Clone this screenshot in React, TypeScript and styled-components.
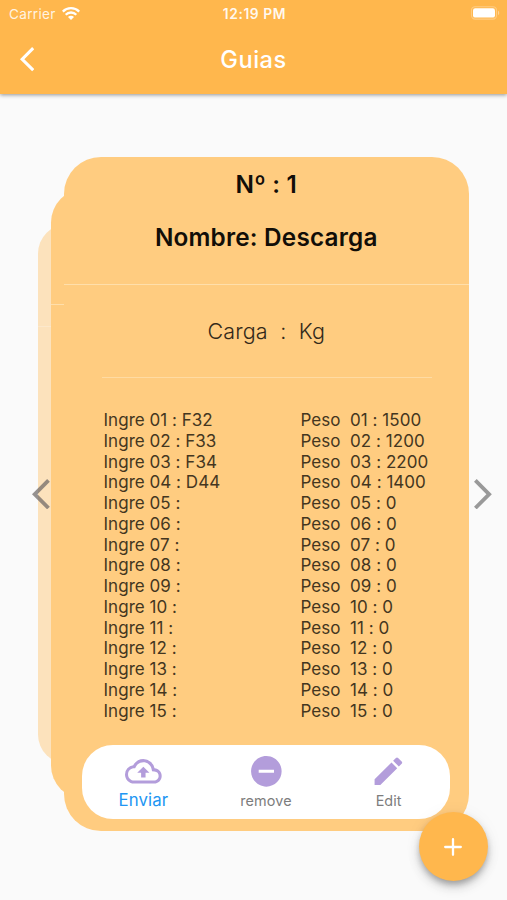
import React from "react";
import styled, { createGlobalStyle, css } from "styled-components";

const GlobalStyle = createGlobalStyle`
  *, *::before, *::after { box-sizing: border-box; }
  html, body { margin: 0; padding: 0; }
  body {
    background: #fafafa;
    font-family: Inter, Roboto, "Liberation Sans", sans-serif;
    font-feature-settings: "calt" 0;
  }
`;

const Screen = styled.div`
  position: relative;
  width: 507px;
  height: 900px;
  overflow: hidden;
  background: #fafafa;
  display: flex;
  flex-direction: column;
`;

const Header = styled.header`
  height: 94px;
  flex: none;
  background: #ffb74d;
  color: #fff;
  box-shadow: 0 1px 4px rgba(0, 0, 0, 0.42);
`;

const StatusBar = styled.div`
  height: 27px;
  padding: 1px 7px 0 9px;
  display: grid;
  grid-template-columns: 1fr auto 1fr;
  align-items: center;
  font-size: 13.6px;
  line-height: 26px;
`;

const Carrier = styled.div`
  display: flex;
  align-items: center;
  gap: 6px;
  color: rgba(255, 255, 255, 0.85);
  letter-spacing: 0.3px;

  svg {
    margin-top: -2px;
  }
`;

const Clock = styled.div`
  font-weight: 600;
  font-size: 13.8px;
  letter-spacing: 0.6px;
  color: rgba(255, 255, 255, 0.92);
`;

const BatterySlot = styled.div`
  display: flex;
  justify-content: flex-end;
  margin-top: -2px;
`;

const TitleBar = styled.div`
  height: 66px;
  display: grid;
  grid-template-columns: 100px 1fr 100px;
  align-items: center;
  padding: 0 0 1px;
`;

const BackButton = styled.button`
  border: 0;
  padding: 0 0 0 20px;
  background: none;
  color: #fff;
  display: flex;
`;

const Title = styled.h1`
  margin: 0;
  text-align: center;
  font-size: 23.6px;
  font-weight: 500;
  line-height: 30px;
  letter-spacing: 0.5px;
`;

const Carousel = styled.main`
  height: 674px;
  margin-top: 63px;
  flex: none;
  display: grid;
  grid-template-columns: 32px 1fr 15.5px;
  align-items: center;
`;

const Deck = styled.div`
  grid-column: 1 / -1;
  grid-row: 1;
  display: grid;
  align-items: center;
  justify-items: start;
  height: 674px;
`;

const layer = css`
  grid-area: 1 / 1;
  overflow: hidden;
`;

const BackCard = styled.div<{ $left: number; $scale: number; $faded?: boolean }>`
  ${layer}
  margin-left: ${(p) => p.$left}px;
  width: ${(p) => 404.5 * p.$scale}px;
  height: ${(p) => 674 * p.$scale}px;
  border-radius: ${(p) => 37 * p.$scale}px;
  background: ${(p) => (p.$faded ? "#fce2bc" : "#ffcc80")};
  padding-top: ${(p) => 127 * p.$scale}px;
`;

const Card = styled.section`
  ${layer}
  margin-left: 64px;
  width: 404.5px;
  height: 674px;
  border-radius: 37px;
  background: #ffcc80;
  display: flex;
  flex-direction: column;
`;

const Rule = styled.hr<{ $tone?: "soft" | "faded" }>`
  border: 0;
  margin: ${(p) => (p.$tone === "soft" ? "0 37px 0 38px" : "0")};
  height: 1px;
  flex: none;
  background: ${(p) =>
    p.$tone === "soft" ? "#ffdba3" : p.$tone === "faded" ? "#fce8cb" : "#ffdfab"};
`;

const CardHead = styled.div`
  height: 127px;
  flex: none;
  padding-top: 12px;
  text-align: center;
  font-size: 24.3px;
  font-weight: 600;
  line-height: 30px;
  color: #120e08;
`;

const GuideNumber = styled.div`
  letter-spacing: 0.2px;
`;

const Name = styled.div`
  margin-top: 23px;
  letter-spacing: 0.2px;
`;

const Load = styled.div`
  height: 92px;
  flex: none;
  line-height: 92px;
  text-align: center;
  white-space: pre;
  font-size: 21.5px;
  font-weight: 300;
  letter-spacing: 0.15px;
  color: #33291a;
`;

const Tables = styled.div`
  display: grid;
  grid-template-columns: 197px 1fr;
  padding: 32px 0 0 39.5px;
`;

const List = styled.ul`
  margin: 0;
  padding: 0;
  list-style: none;
`;

const Line = styled.li`
  height: 20.77px;
  line-height: 20.77px;
  font-size: 17px;
  letter-spacing: 0.03px;
  white-space: pre;
  color: #443620;
`;

const Actions = styled.nav`
  margin: 24px 18.5px 0 18px;
  height: 74px;
  flex: none;
  border-radius: 31px;
  background: #fff;
  display: grid;
  grid-template-columns: repeat(3, 1fr);
`;

const Action = styled.button<{ $active?: boolean }>`
  border: 0;
  padding: 8px 0 0;
  background: none;
  font-family: inherit;
  display: flex;
  flex-direction: column;
  align-items: center;
  gap: ${(p) => (p.$active ? 0 : 1.3)}px;
  color: ${(p) => (p.$active ? "#2196f3" : "#7d7d7d")};
  font-size: ${(p) => (p.$active ? 16.8 : 14.4)}px;
  line-height: 20px;
  letter-spacing: ${(p) => (p.$active ? 0.1 : 0.1)}px;

  svg {
    color: #b39ddb;
    flex: none;
  }
`;

const Arrow = styled.button<{ $next?: boolean }>`
  grid-row: 1;
  grid-column: 2;
  justify-self: ${(p) => (p.$next ? "end" : "start")};
  z-index: 1;
  border: 0;
  padding: 0;
  background: none;
  display: flex;
  color: ${(p) => (p.$next ? "#999" : "rgba(105, 100, 98, 0.7)")};
`;

const AddButton = styled.button`
  position: absolute;
  left: 419px;
  top: 812px;
  width: 69px;
  height: 69px;
  border: 0;
  border-radius: 50%;
  padding: 0 1px 0 0;
  background: #ffb74d;
  color: #fff;
  display: grid;
  place-items: center;
  box-shadow: 0 4px 6px -1px rgba(0, 0, 0, 0.28), 0 7px 12px rgba(0, 0, 0, 0.13),
    0 1px 18px rgba(0, 0, 0, 0.05);
`;

const Chevron = ({ size, flip }: { size: number; flip?: boolean }) => (
  <svg width={size * 0.486} height={size * 0.83} viewBox="0 2.05 11.67 19.9" fill="currentColor">
    <path
      transform={flip ? "translate(11.67 0) scale(-1 1)" : undefined}
      d="M11.67 3.87 9.9 2.1 0 12l9.9 9.9 1.77-1.77L3.54 12z"
    />
  </svg>
);

const WifiIcon = () => (
  <svg width="18" height="13" viewBox="0 0 18 13" fill="none" stroke="#fff" strokeWidth="2.3">
    <path d="M.8 4.6a11.6 11.6 0 0 1 16.4 0" />
    <path d="M3.7 7.7a7.5 7.5 0 0 1 10.6 0" />
    <path d="M6 10a4.2 4.2 0 0 1 6 0L9 13z" fill="#fff" stroke="none" />
  </svg>
);

const BatteryIcon = () => (
  <svg width="30" height="14" viewBox="0 0 30 14">
    <rect x="1.5" y=".7" width="25" height="12.4" rx="3.6" fill="none" stroke="#fff" strokeOpacity=".3" strokeWidth="1.1" />
    <rect x="3" y="2.2" width="22" height="9.4" rx="2.2" fill="#fff" />
    <path d="M28 4.7c1.6.6 1.6 3.8 0 4.4z" fill="#fff" fillOpacity=".4" />
  </svg>
);

const GLYPHS = {
  upload:
    "M19.35 10.04A7.49 7.49 0 0 0 12 4C9.11 4 6.6 5.64 5.35 8.04A5.994 5.994 0 0 0 0 14c0 3.31 2.69 6 6 6h13c2.76 0 5-2.24 5-5 0-2.64-2.05-4.78-4.65-4.96zM19 18H6c-2.21 0-4-1.79-4-4 0-2.05 1.53-3.76 3.56-3.97l1.07-.11.5-.95A5.469 5.469 0 0 1 12 6c2.62 0 4.88 1.86 5.39 4.43l.3 1.5 1.53.11A2.98 2.98 0 0 1 22 15c0 1.65-1.35 3-3 3zM8 13h2.55v3h2.9v-3H16l-4-4z",
  remove: "M12 2C6.48 2 2 6.48 2 12s4.48 10 10 10 10-4.48 10-10S17.52 2 12 2zm5 11H7v-2h10v2z",
  edit: "M3 17.25V21h3.75L17.81 9.94l-3.75-3.75L3 17.25zM20.71 7.04a.996.996 0 0 0 0-1.41l-2.34-2.34a.996.996 0 0 0-1.41 0l-1.83 1.83 3.75 3.75 1.83-1.83z",
};

const Glyph = ({ name }: { name: keyof typeof GLYPHS }) => (
  <svg width="36.7" height="36.7" viewBox="0 0 24 24" fill="currentColor">
    <path d={GLYPHS[name]} />
  </svg>
);

const ingredients = ["F32", "F33", "F34", "D44"];
const weights = [1500, 1200, 2200, 1400];
const rows = Array.from({ length: 15 }, (_, i) => ({
  id: String(i + 1).padStart(2, "0"),
  ingredient: ingredients[i] ?? "",
  weight: weights[i] ?? 0,
}));

export default function App() {
  return (
    <>
      <GlobalStyle />
      <Screen>
        <Header>
          <StatusBar>
            <Carrier>
              Carrier
              <WifiIcon />
            </Carrier>
            <Clock>12:19 PM</Clock>
            <BatterySlot>
              <BatteryIcon />
            </BatterySlot>
          </StatusBar>
          <TitleBar>
            <BackButton aria-label="Back">
              <Chevron size={29.4} />
            </BackButton>
            <Title>Guias</Title>
          </TitleBar>
        </Header>

        <Carousel>
          <Deck>
            <BackCard $left={38} $scale={0.8} $faded>
              <Rule $tone="faded" />
            </BackCard>
            <BackCard $left={51} $scale={0.904}>
              <Rule />
            </BackCard>
            <Card>
              <CardHead>
                <GuideNumber>Nº : 1</GuideNumber>
                <Name>Nombre: Descarga</Name>
              </CardHead>
              <Rule />
              <Load>Carga  :  Kg</Load>
              <Rule $tone="soft" />
              <Tables>
                <List>
                  {rows.map((r) => (
                    <Line key={r.id}>{`Ingre ${r.id} : ${r.ingredient}`}</Line>
                  ))}
                </List>
                <List>
                  {rows.map((r) => (
                    <Line key={r.id}>{`Peso  ${r.id} : ${r.weight}`}</Line>
                  ))}
                </List>
              </Tables>
              <Actions>
                <Action $active>
                  <Glyph name="upload" />
                  Enviar
                </Action>
                <Action>
                  <Glyph name="remove" />
                  remove
                </Action>
                <Action>
                  <Glyph name="edit" />
                  Edit
                </Action>
              </Actions>
            </Card>
          </Deck>
          <Arrow aria-label="Previous">
            <Chevron size={36.7} />
          </Arrow>
          <Arrow $next aria-label="Next">
            <Chevron size={36.7} flip />
          </Arrow>
        </Carousel>

        <AddButton aria-label="Add">
          <svg width="18" height="18" viewBox="0 0 18 18" stroke="currentColor" strokeWidth="2.3" strokeLinecap="round">
            <path d="M9 1.2v15.6M1.2 9h15.6" />
          </svg>
        </AddButton>
      </Screen>
    </>
  );
}
